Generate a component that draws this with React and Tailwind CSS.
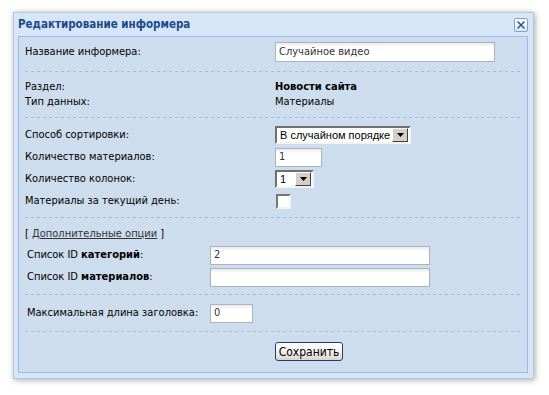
import React from 'react';

const FONT = { fontFamily: '"DejaVu Sans Condensed", "Liberation Sans", sans-serif' };

function Dashed() {
  return <div className="h-px w-full bg-[repeating-linear-gradient(90deg,#a3bdea_0_3px,transparent_3px_6px)]" />;
}

function TextInput({ value = '', className = '' }) {
  return (
    <div
      className={`flex items-center border border-[#a9b3c2] bg-[linear-gradient(#e9e9e9,#ffffff_4px)] pl-[3px] text-[11px] text-[#333] ${className}`}
    >
      {value}
    </div>
  );
}

function Select({ value, className = '' }) {
  return (
    <div
      className={`flex items-center border-2 border-t-[#6f6f6f] border-l-[#6f6f6f] border-b-[#f4f4f4] border-r-[#f4f4f4] bg-white ${className}`}
    >
      <span className="min-w-0 flex-1 whitespace-nowrap pl-[3px] font-['Liberation_Sans',sans-serif] text-[11px] leading-[14px] text-black">
        {value}
      </span>
      <span className="mr-px flex h-[14px] w-[16px] shrink-0 items-center justify-center border border-t-white border-l-white border-b-[#404040] border-r-[#404040] bg-[#d4d0c8]">
        <svg width="7" height="4" viewBox="0 0 7 4">
          <path d="M0 0h7L3.5 4z" fill="#000" />
        </svg>
      </span>
    </div>
  );
}

function Row({ label, children, h = 'h-[22px]' }) {
  return (
    <div className={`flex items-center ${h}`}>
      <div className="w-[250px] text-[11px] text-black">{label}</div>
      {children}
    </div>
  );
}

function SubRow({ label, children }) {
  return (
    <div className="flex h-[22px] items-center">
      <div className="w-[185px] pl-[2px] text-[11px] text-black">{label}</div>
      {children}
    </div>
  );
}

export default function App() {
  return (
    <div className="min-h-screen bg-white pl-[13px] pt-[12px]" style={FONT}>
      <div className="w-[521px] border border-[#b6c7dd] bg-[#d7e6f7] px-[4px] pb-[5px] pr-[5px] shadow-[1px_1px_6px_rgba(0,0,0,0.35)]">
        {/* Title bar */}
        <div className="flex h-[23px] items-center justify-between">
          <span className="text-[11.5px] font-bold text-[#1c4a8b]">Редактирование информера</span>
          <span className="flex h-[14px] w-[14px] items-center justify-center rounded-[2px] border border-[#7c9fd3] bg-[linear-gradient(#ffffff,#dce8f7)]">
            <svg width="8" height="8" viewBox="0 0 8 8">
              <path d="M0.5 0.5L7.5 7.5M7.5 0.5L0.5 7.5" stroke="#24497f" strokeWidth="1.4" />
            </svg>
          </span>
        </div>

        {/* Content panel */}
        <div className="flex flex-col border border-[#9fbae8] bg-[#cedded] px-[6px] pb-[11px] pt-[5px]">
          <Row label="Название информера:" h="h-[20px]">
            <TextInput value="Случайное видео" className="h-[20px] w-[220px]" />
          </Row>

          <div className="mt-[9px]"><Dashed /></div>

          <div className="mt-[8px] flex flex-col">
            <Row label="Раздел:" h="h-[15px]">
              <span className="text-[11px] font-bold text-black">Новости сайта</span>
            </Row>
            <Row label="Тип данных:" h="h-[15px]">
              <span className="text-[11px] text-black">Материалы</span>
            </Row>
          </div>

          <div className="mt-[7px]"><Dashed /></div>

          <div className="mt-[6px] flex flex-col">
            <Row label="Способ сортировки:">
              <Select value="В случайном порядке" className="h-[18px] w-[136px]" />
            </Row>
            <Row label="Количество материалов:">
              <TextInput value="1" className="h-[19px] w-[47px]" />
            </Row>
            <Row label="Количество колонок:">
              <Select value="1" className="h-[18px] w-[39px]" />
            </Row>
            <Row label="Материалы за текущий день:">
              <span className="ml-px h-[15px] w-[15px] border-2 border-t-[#777] border-l-[#777] border-b-[#f2f2f2] border-r-[#f2f2f2] bg-white" />
            </Row>
          </div>

          <div className="mt-[5px]"><Dashed /></div>

          <div className="mt-[8px] flex h-[16px] items-center text-[11px] text-black">
            [&nbsp;<span className="text-[#333] underline">Дополнительные опции</span>&nbsp;]
          </div>

          <div className="mt-[2px] flex flex-col">
            <SubRow label={<>Список ID <b>категорий</b>:</>}>
              <TextInput value="2" className="h-[19px] w-[220px]" />
            </SubRow>
            <SubRow label={<>Список ID <b>материалов</b>:</>}>
              <TextInput className="h-[19px] w-[220px]" />
            </SubRow>
          </div>

          <div className="mt-[6px]"><Dashed /></div>

          <div className="mt-[7px]">
            <SubRow label="Максимальная длина заголовка:">
              <TextInput value="0" className="h-[19px] w-[43px]" />
            </SubRow>
          </div>

          <div className="mt-[7px]"><Dashed /></div>

          <div className="mt-[10px] pl-[250px]">
            <button className="flex h-[19px] w-[68px] items-center justify-center rounded-[3px] border border-[#1f3f72] bg-[linear-gradient(#ffffff,#f0efea_60%,#d8d4ca)] text-[12px] text-black">
              Сохранить
            </button>
          </div>
        </div>
      </div>
    </div>
  );
}
